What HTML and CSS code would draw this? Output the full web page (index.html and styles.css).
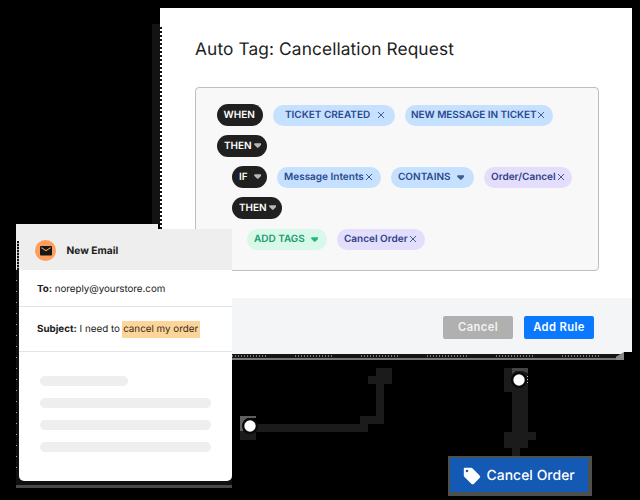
FILE: index.html
```html
<!DOCTYPE html>
<html lang="en">
<head>
<meta charset="utf-8">
<title>Auto Tag</title>
<link rel="stylesheet" href="styles.css">
</head>
<body>
<main class="canvas">
  <svg class="connectors" width="640" height="500" viewBox="0 0 640 500">
    <path fill="#1b1b1b" d="M376 368h16v16h-8v40h-16v8H256v-8h104v-8h16v-32h-8v-8h8z"/>
    <path fill="#1b1b1b" d="M240 424h24v8h-8v8h-16zM504 368h24v64h8v8h-8v8h-8v8h-8v-8h-8v-16h8v-40h-8z"/>
    <path fill="#606060" d="M240 416h16v2h-9l-4 5v8h-3z"/>
    <path fill="#444" d="M512 368h16v5l-5-2h-7l-4 3z"/>
    <circle cx="250" cy="426" r="8" fill="#080808"/>
    <circle cx="519" cy="380" r="8" fill="#080808"/>
    <circle cx="250" cy="426" r="5.7" fill="#fff"/>
    <circle cx="519" cy="380" r="5.7" fill="#fff"/>
    <path stroke="#bbb" stroke-dasharray="1 2" d="M527.5 376v8"/>
  </svg>

  <div class="rule-edge-left"></div>
  <div class="rule-edge-bottom"></div>
  <section class="rule">
    <h1 class="rule-title">Auto Tag: Cancellation Request</h1>
    <div class="conditions">
      <div class="row">
        <span class="pill dark when">WHEN</span>
        <span class="pill blue created">TICKET CREATED<svg class="x" viewBox="0 0 8 8"><path d="M1 1l6 6M7 1L1 7"/></svg></span>
        <span class="pill blue message">NEW MESSAGE IN TICKET<svg class="x" viewBox="0 0 8 8"><path d="M1 1l6 6M7 1L1 7"/></svg></span>
      </div>
      <div class="row">
        <span class="pill dark then">THEN<svg class="caret" viewBox="0 0 8 5"><path d="M.5 0h7L8 1.5 4.5 5h-1L0 1.5z"/></svg></span>
      </div>
      <div class="row nested">
        <span class="pill dark if">IF<svg class="caret" viewBox="0 0 8 5"><path d="M.5 0h7L8 1.5 4.5 5h-1L0 1.5z"/></svg></span>
        <span class="pill blue intents">Message Intents<svg class="x" viewBox="0 0 8 8"><path d="M1 1l6 6M7 1L1 7"/></svg></span>
        <span class="pill blue contains">CONTAINS<svg class="caret" viewBox="0 0 8 5"><path d="M.5 0h7L8 1.5 4.5 5h-1L0 1.5z"/></svg></span>
        <span class="pill violet value">Order/Cancel<svg class="x" viewBox="0 0 8 8"><path d="M1 1l6 6M7 1L1 7"/></svg></span>
      </div>
      <div class="row nested">
        <span class="pill dark then">THEN<svg class="caret" viewBox="0 0 8 5"><path d="M.5 0h7L8 1.5 4.5 5h-1L0 1.5z"/></svg></span>
      </div>
      <div class="row deep">
        <span class="pill green tags">ADD TAGS<svg class="caret" viewBox="0 0 8 5"><path d="M.5 0h7L8 1.5 4.5 5h-1L0 1.5z"/></svg></span>
        <span class="pill violet order">Cancel Order<svg class="x" viewBox="0 0 8 8"><path d="M1 1l6 6M7 1L1 7"/></svg></span>
      </div>
    </div>
    <footer class="actions">
      <button class="btn cancel">Cancel</button>
      <button class="btn add">Add Rule</button>
    </footer>
  </section>

  <div class="email-edge-bottom"></div>
  <div class="email-edge-top"></div>
  <section class="email">
    <header class="email-head">
      <svg class="mail" viewBox="0 0 21 21"><circle cx="10.5" cy="10.5" r="10.5" fill="#ff9d5c"/><rect x="5" y="6" width="12" height="9.5" rx="1" fill="#161616"/><path d="M6.3 7.6l4.7 3 4.7-3" fill="none" stroke="#ff9d5c" stroke-width="1.1"/></svg>
      <span class="email-title">New Email</span>
    </header>
    <p class="line to"><b>To:</b> noreply@yourstore.com</p>
    <p class="line subject"><b>Subject:</b> I need to <mark>cancel my order</mark></p>
    <div class="skeleton">
      <i class="short"></i><i></i><i></i><i></i>
    </div>
  </section>

  <div class="tag">
    <svg class="tag-icon" viewBox="0 0 18 18"><path fill="#fff" fill-rule="evenodd" d="M2 .8h6.2c.5 0 1 .2 1.4.6l7 7c.8.8.8 1.900 0 2.700l-5.600 5.600c-.8.8-1.900.8-2.700 0l-6.800-6.800C1 9.400.8 9 .8 8.500V2C.8 1.300 1.300.8 2 .8zM4 2.700a1.300 1.300 0 1 0 0 2.600 1.300 1.300 0 0 0 0-2.600z"/></svg>
    <span class="tag-text">Cancel Order</span>
  </div>
</main>
</body>
</html>
```
FILE: styles.css
```css
* { box-sizing: border-box; }
body { margin: 0; background: #000; font-family: Inter, "Liberation Sans", sans-serif; text-rendering: geometricPrecision; }
.canvas { position: relative; width: 640px; height: 500px; overflow: hidden; background: #000; }
.connectors { position: absolute; left: 0; top: 0; }

/* dialog */
.rule-edge-left { position: absolute; left: 152px; top: 24px; width: 8px; height: 200px; background: #131313; }
.rule-edge-bottom { position: absolute; left: 232px; top: 352px; width: 392px; height: 8px; background: #151515; border-top: 2px solid #f3f5f7; border-bottom: 2px solid #777; }
.rule-edge-bottom::before { content: ""; position: absolute; left: 0; top: 1px; width: 370px; height: 2px; background: repeating-linear-gradient(90deg, transparent 0 34px, #151515 34px 61px, transparent 61px 67px), repeating-linear-gradient(90deg, #777 0 1px, #151515 1px 3px); }
.rule-edge-bottom::after { content: ""; position: absolute; right: 0; top: -2px; width: 8px; height: 8px; background: #888; clip-path: polygon(100% 0, 100% 100%, 0 100%, 0 60%); }
.rule { position: absolute; left: 160px; top: 8px; width: 472px; height: 344px; background: #fff; display: flex; flex-direction: column; }
.rule::before { content: ""; position: absolute; left: 0; top: 19px; width: 2px; height: 202px; background: repeating-linear-gradient(#111 0 2px, #fff 2px 4px); }
.rule-title { margin: 30px 0 0 35px; height: 24px; font-size: 17.3px; line-height: 24px; font-weight: 400; letter-spacing: .12px; color: #1c1c1e; white-space: nowrap; }
.conditions { width: 404px; height: 184px; margin: 25px 0 0 35px; padding: 17px 0 0 21px; border: 1px solid #bdbdbd; border-radius: 4px; background: #f8f8f8; }
.row { display: flex; height: 31px; align-items: flex-start; gap: 10px; }
.nested { margin-left: 15px; }
.deep { margin-left: 30px; }
.pill { display: flex; align-items: center; height: 20.5px; border-radius: 11px; font-size: 10px; font-weight: 600; white-space: nowrap; }
.dark { height: 21.5px; margin-top: -.8px; background: #202020; color: #fff; }
.blue { background: #c6e0ff; color: #284a8e; }
.violet { background: #e3defc; color: #303f88; }
.green { background: #d8f8ea; color: #1d9a70; }
.when { width: 46px; padding-left: 6.500px; }
.created { width: 122px; padding-left: 12px; }
.message { width: 148px; padding-left: 6px; letter-spacing: -.06px; }
.then { width: 50px; padding-left: 7px; }
.if { width: 35px; padding-left: 7px; }
.intents { width: 104px; padding-left: 7px; }
.contains { width: 83px; padding-left: 7px; }
.value { width: 88px; padding-left: 7px; }
.tags { width: 80px; padding-left: 7px; }
.order { width: 88px; padding-left: 7px; }
.x { flex: none; width: 8px; height: 8px; margin-left: 1px; fill: none; stroke: #455d92; stroke-width: 1; }
.created .x { margin-left: 7px; }
.message .x { margin-left: 0; }
.caret { flex: none; width: 7.500px; height: 5px; margin-left: 2px; fill: #b7b7b7; }
.if .caret { margin-left: 6px; }
.contains .caret { margin-left: 6px; fill: #3f5f8c; }
.tags .caret { margin-left: 6px; fill: #24b880; }
.actions { display: flex; justify-content: flex-end; gap: 11px; height: 54px; margin-top: auto; padding: 18px 38px 0 0; background: #f3f5f7; }
.btn { width: 70px; height: 23px; padding: 0; border: 0; border-radius: 2px; font: 600 11.2px/23px Inter, sans-serif; letter-spacing: .4px; color: #fff; }
.cancel { background: #b0b0b0; color: #f3f3f3; }
.add { background: #0a79ff; }

/* email */
.email-edge-top { position: absolute; left: 16px; top: 224px; width: 142px; height: 46px; background: #eee; }
.email-edge-top::after { content: ""; position: absolute; left: 1px; top: 17px; width: 2px; height: 29px; background: repeating-linear-gradient(#111 0 2px, #aaa 2px 3px); }
.email-edge-bottom { position: absolute; left: 16px; top: 270px; width: 216px; height: 218px; background: repeating-linear-gradient(transparent 0 10px, #aaa 10px 11px) 0 0 / 1px 200px no-repeat, #101010; border-bottom: 3px solid #484848; }
.email { position: absolute; left: 19px; top: 229px; width: 213px; height: 252px; background: #fff; border-radius: 0 0 5px 5px; overflow: hidden; color: #202020; font-size: 9.800px; }
.email-head { display: flex; align-items: center; gap: 10.500px; height: 41px; padding: 2px 0 0 16px; background: #eee; }
.mail { width: 21px; height: 21px; }
.email-title { font-size: 10.2px; font-weight: 700; }
.line { margin: 0; padding-left: 18px; border-bottom: 1px solid #e3e3e3; white-space: nowrap; }
.to { height: 37px; line-height: 40px; letter-spacing: -.03px; }
.subject { height: 45px; line-height: 46px; }
.subject mark { display: inline-block; height: 17px; line-height: 17px; margin-left: -.500px; padding: 0 2px 0 1px; background: #fcd59b; color: #3a2a18; }
.skeleton { display: flex; flex-direction: column; gap: 12px; padding: 24px 0 0 21px; }
.skeleton i { width: 171px; height: 10px; border-radius: 5px; background: #eee; }
.skeleton .short { width: 88px; }

/* result tag */
.tag { position: absolute; left: 448px; top: 456px; width: 144px; height: 40px; display: flex; align-items: center; padding: 1px 0 0 13px; border: solid #4d504d; border-width: 2px 4px 4px 2px; background: #1459b3; color: #fff; }
.tag-icon { width: 18px; height: 18px; margin-right: 5.500px; }
.tag-text { font-size: 13.9px; font-weight: 500; letter-spacing: .05px; white-space: nowrap; }
```
